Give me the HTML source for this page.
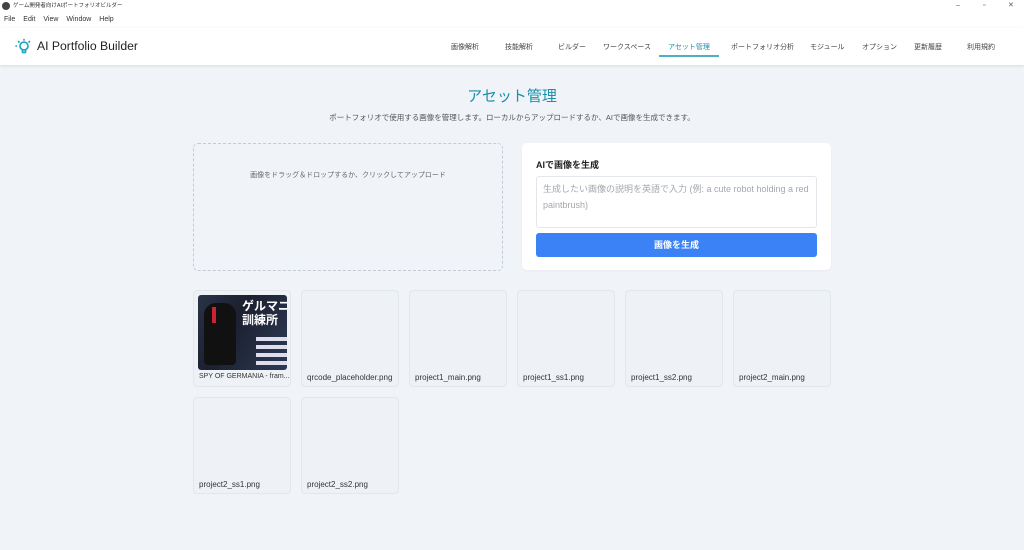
<!DOCTYPE html>
<html><head><meta charset="utf-8"><style>
*{margin:0;padding:0;box-sizing:border-box}
body{width:1024px;height:550px;overflow:hidden;background:#f0f4f8;font-family:"Liberation Sans","Noto Sans CJK JP",sans-serif;color:#333;position:relative}
.abs{position:absolute}
#tb{top:0;left:0;width:1024px;height:12px;background:#fff;font-size:5.5px;line-height:12px}
#mb{top:12px;left:0;width:1024px;height:16px;background:#fff;font-size:7px;line-height:16px;color:#333}
#hd{top:28px;left:0;width:1024px;height:37px;background:#fff;box-shadow:0 1px 3px rgba(0,0,0,.1)}
.nav{position:absolute;top:14px;font-size:7px;color:#444;white-space:nowrap}
.card{position:absolute;width:98px;height:97px;background:#eef2f6;border:1px solid #e2e7ec;border-radius:4px}
.card span{position:absolute;left:5px;top:82px;font-size:8px;color:#333;white-space:nowrap}
</style></head><body>
<div id="tb" class="abs"><span style="position:absolute;left:2px;top:2px;width:8px;height:8px;border-radius:50%;background:#444"></span><span style="position:absolute;left:13px">ゲーム開発者向けAIポートフォリオビルダー</span>
<span style="position:absolute;left:956px;color:#555;font-size:7px">–</span><span style="position:absolute;left:983px;color:#555;font-size:7px">▫</span><span style="position:absolute;left:1008px;color:#555;font-size:7px">✕</span></div>
<div id="mb" class="abs"><span style="margin-left:4px">File</span><span style="margin-left:8px">Edit</span><span style="margin-left:8px">View</span><span style="margin-left:8px">Window</span><span style="margin-left:8px">Help</span></div>
<div id="hd" class="abs">
<svg class="abs" style="left:14px;top:10px" width="18" height="18" viewBox="0 0 18 18" fill="none" stroke="#17a2c0" stroke-width="1.6" stroke-linecap="round"><circle cx="10" cy="8" r="4"/><path d="M8.5 12v2.5h3V12"/><path d="M10 1.5v.5M4.5 3.5l.5.5M15.5 3.5l-.5.5M2 8h.5"/></svg>
<div class="abs" style="left:37px;top:11px;font-size:12.2px;color:#222">AI Portfolio Builder</div>
<div class="nav" style="left:451px">画像解析</div>
<div class="nav" style="left:505px">技能解析</div>
<div class="nav" style="left:558px">ビルダー</div>
<div class="nav" style="left:603px">ワークスペース</div>
<div class="nav" style="left:668px;color:#1a8fa8">アセット管理</div>
<div class="abs" style="left:659px;top:27px;width:60px;height:2px;background:#4ab0c4"></div>
<div class="nav" style="left:731px">ポートフォリオ分析</div>
<div class="nav" style="left:810px">モジュール</div>
<div class="nav" style="left:862px">オプション</div>
<div class="nav" style="left:914px">更新履歴</div>
<div class="nav" style="left:967px">利用規約</div>
</div>
<div class="abs" style="left:0;width:1024px;top:85px;text-align:center;font-size:15px;color:#1a8fa8">アセット管理</div>
<div class="abs" style="left:0;width:1024px;top:112px;text-align:center;font-size:7.5px;color:#555">ポートフォリオで使用する画像を管理します。ローカルからアップロードするか、AIで画像を生成できます。</div>
<div class="abs" style="left:193px;top:143px;width:310px;height:128px;border:1px dashed #c4cbd2;border-radius:5px"></div>
<div class="abs" style="left:193px;width:310px;top:170px;text-align:center;font-size:7px;color:#666">画像をドラッグ＆ドロップするか、クリックしてアップロード</div>
<div class="abs" style="left:522px;top:143px;width:309px;height:127px;background:#fff;border-radius:5px;box-shadow:0 1px 2px rgba(0,0,0,.04)"></div>
<div class="abs" style="left:536px;top:158px;font-size:9px;font-weight:bold;color:#222">AIで画像を生成</div>
<div class="abs" style="left:536px;top:176px;width:281px;height:52px;border:1px solid #e3e6ea;border-radius:3px;padding:4px 6px;font-size:9px;line-height:16px;color:#a3a8ae">生成したい画像の説明を英語で入力 (例: a cute robot holding a red paintbrush)</div>
<div class="abs" style="left:536px;top:233px;width:281px;height:24px;background:#3b82f6;border-radius:3px;color:#fff;font-size:9px;font-weight:bold;text-align:center;line-height:24px">画像を生成</div>
<div class="card" style="left:193px;top:290px"><div style="position:absolute;left:4px;top:4px;width:89px;height:75px;border-radius:3px;background:linear-gradient(120deg,#2a3348 0%,#1c2030 40%,#2d3a55 100%);overflow:hidden"><div style="position:absolute;left:6px;top:8px;width:32px;height:62px;background:#111;border-radius:12px 12px 4px 4px"></div><div style="position:absolute;left:14px;top:12px;width:4px;height:16px;background:#c23"></div><div style="position:absolute;left:44px;top:4px;color:#fff;font-size:12px;font-weight:bold;line-height:14px;white-space:nowrap">ゲルマニ<br>訓練所</div><div style="position:absolute;left:58px;top:42px;width:31px;height:4px;background:#dde"></div><div style="position:absolute;left:58px;top:50px;width:31px;height:4px;background:#dde"></div><div style="position:absolute;left:58px;top:58px;width:31px;height:4px;background:#dde"></div><div style="position:absolute;left:58px;top:66px;width:31px;height:4px;background:#dde"></div></div><span style="font-size:7px">SPY OF GERMANIA - fram...</span></div>
<div class="card" style="left:301px;top:290px"><span>qrcode_placeholder.png</span></div>
<div class="card" style="left:409px;top:290px"><span>project1_main.png</span></div>
<div class="card" style="left:517px;top:290px"><span>project1_ss1.png</span></div>
<div class="card" style="left:625px;top:290px"><span>project1_ss2.png</span></div>
<div class="card" style="left:733px;top:290px"><span>project2_main.png</span></div>
<div class="card" style="left:193px;top:397px"><span>project2_ss1.png</span></div>
<div class="card" style="left:301px;top:397px"><span>project2_ss2.png</span></div>
</body></html>
